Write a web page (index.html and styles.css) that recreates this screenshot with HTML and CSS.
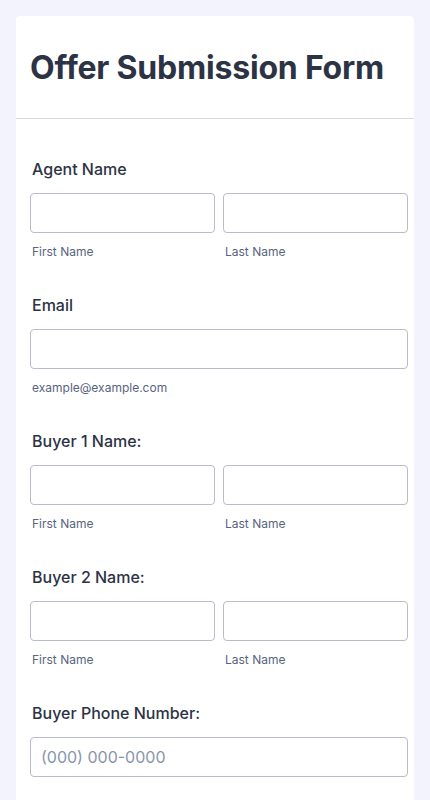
FILE: index.html
```html
<!DOCTYPE html>
<html lang="en">
<head>
    <meta charset="UTF-8">
    <meta name="viewport" content="width=device-width, initial-scale=1.0">
    <title>Offer Submission Form</title>
    <link rel="stylesheet" href="styles.css">
</head>
<body>
    <div class="form-all">
        <div class="form-header">
            <h1>Offer Submission Form</h1>
        </div>

        <ul class="form-section">
            <li class="form-line">
                <label class="form-label">Agent Name</label>
                <div class="input-row">
                    <div class="input-col">
                        <input type="text">
                        <span class="sublabel">First Name</span>
                    </div>
                    <div class="input-col">
                        <input type="text">
                        <span class="sublabel">Last Name</span>
                    </div>
                </div>
            </li>

            <li class="form-line">
                <label class="form-label">Email</label>
                <div class="input-col">
                    <input type="email">
                    <span class="sublabel">example@example.com</span>
                </div>
            </li>

            <li class="form-line">
                <label class="form-label">Buyer 1 Name:</label>
                <div class="input-row">
                    <div class="input-col">
                        <input type="text">
                        <span class="sublabel">First Name</span>
                    </div>
                    <div class="input-col">
                        <input type="text">
                        <span class="sublabel">Last Name</span>
                    </div>
                </div>
            </li>

            <li class="form-line">
                <label class="form-label">Buyer 2 Name:</label>
                <div class="input-row">
                    <div class="input-col">
                        <input type="text">
                        <span class="sublabel">First Name</span>
                    </div>
                    <div class="input-col">
                        <input type="text">
                        <span class="sublabel">Last Name</span>
                    </div>
                </div>
            </li>

            <li class="form-line">
                <label class="form-label">Buyer Phone Number:</label>
                <div class="input-col">
                    <input type="tel" placeholder="(000) 000-0000">
                </div>
            </li>
        </ul>
    </div>
</body>
</html>
```

FILE: styles.css
```css
* {
    margin: 0;
    padding: 0;
    box-sizing: border-box;
}

body {
    font-family: Inter, 'Noto Sans', sans-serif;
    background-color: #f3f3fe;
    color: #2c3345;
    padding: 16px 16px 0 16px;
}

.form-all {
    background-color: #ffffff;
    border-radius: 4px 4px 0 0;
    min-height: 800px;
}

.form-header {
    height: 103px;
    display: flex;
    align-items: center;
    padding-left: 14px;
    border-bottom: 1px solid #d8d8e2;
}

.form-header h1 {
    font-size: 32px;
    font-weight: 700;
    letter-spacing: -0.2px;
    line-height: 1.2;
    color: #2c3345;
    padding-top: 2px;
}

.form-section {
    list-style: none;
    padding: 0 6px 0 14px;
}

.form-line {
    padding: 36px 0 0 0;
}

.form-line:first-child {
    padding-top: 40px;
}

.form-label {
    display: block;
    font-size: 16px;
    font-weight: 500;
    line-height: 20px;
    margin: 0 0 14px 2px;
    color: #2c3345;
}

.input-row {
    display: flex;
    gap: 8px;
}

.input-col {
    flex: 1;
    display: flex;
    flex-direction: column;
}

input {
    width: 100%;
    height: 40px;
    border: 1px solid #b8bdc9;
    border-radius: 4px;
    padding: 0 10px;
    font-family: inherit;
    font-size: 16px;
    color: #2c3345;
    background-color: #ffffff;
}

input::placeholder {
    color: #8894ab;
}

.sublabel {
    display: block;
    font-size: 12px;
    line-height: 14px;
    margin: 12px 0 0 2px;
    color: #57647e;
}
```
